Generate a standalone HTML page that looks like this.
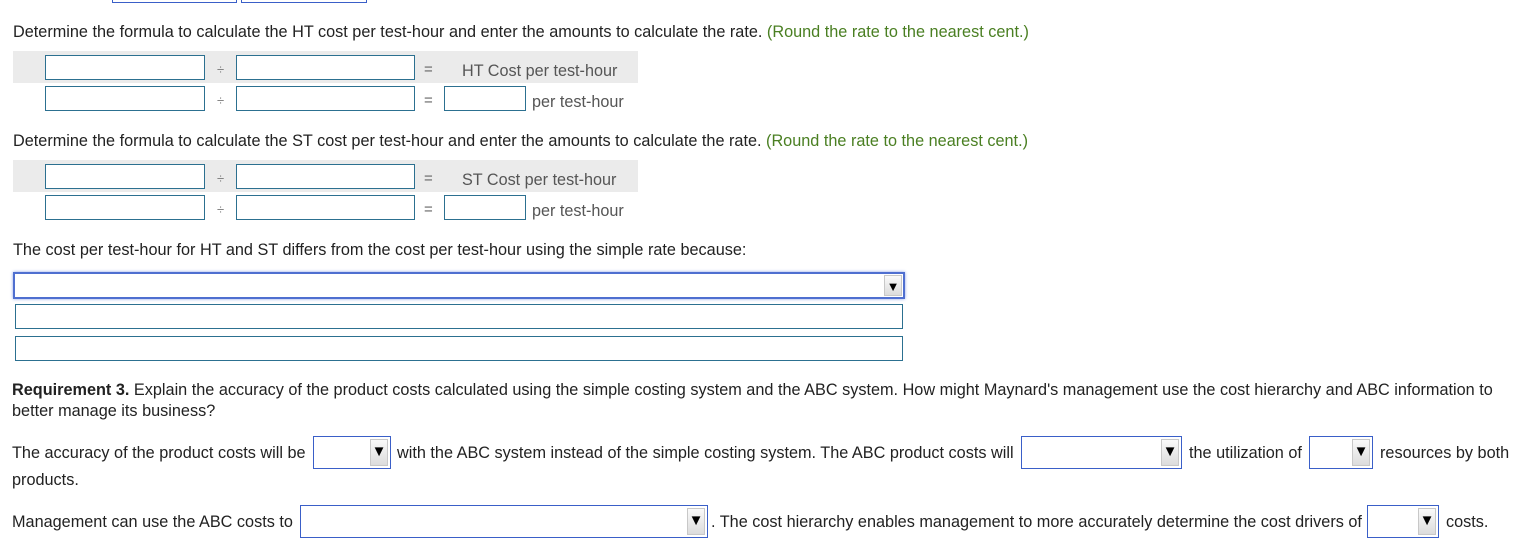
<!DOCTYPE html>
<html><head><style>
body{margin:0;width:1513px;height:551px;background:#fff;font-family:"Liberation Sans",Arial,sans-serif;font-size:16.25px;color:#222;position:relative;overflow:hidden}
.a{position:absolute;white-space:nowrap}
.t{line-height:18px}
.g{color:#4a7f22}
.band{position:absolute;background:#ebebeb}
.in{position:absolute;border:1px solid #2c7090;background:#fff;box-sizing:border-box}
.op{position:absolute;font-size:13px;color:#777}
.eq{position:absolute;font-size:15px;color:#666}
.lbl{position:absolute;color:#555;font-size:16.2px}
.sel{position:absolute;border:1px solid #3a5fc8;background:#fff;box-sizing:border-box}
.sel .b{position:absolute;right:2px;top:2px;bottom:2px;width:18px;background:linear-gradient(#fafafa,#dcdcdc);border:1px solid #c8c8c8;box-sizing:border-box;font-size:15px;text-align:center;color:#000;line-height:24px}
</style></head><body>
<div class="in" style="left:112px;top:-10px;width:125px;height:13px;border-color:#3a5fc8"></div>
<div class="in" style="left:241px;top:-10px;width:126px;height:13px;border-color:#3a5fc8"></div>

<div class="a t" style="left:13px;top:23px">Determine the formula to calculate the HT cost per test-hour and enter the amounts to calculate the rate. <span class="g">(Round the rate to the nearest cent.)</span></div>
<div class="band" style="left:13px;top:51px;width:625px;height:32px"></div>
<div class="in" style="left:45px;top:55px;width:160px;height:25px"></div>
<div class="op" style="left:217px;top:62px">÷</div>
<div class="in" style="left:236px;top:55px;width:179px;height:25px"></div>
<div class="eq" style="left:424px;top:61px">=</div>
<div class="lbl" style="left:462px;top:62px">HT Cost per test-hour</div>
<div class="in" style="left:45px;top:86px;width:160px;height:25px"></div>
<div class="op" style="left:217px;top:93px">÷</div>
<div class="in" style="left:236px;top:86px;width:179px;height:25px"></div>
<div class="eq" style="left:424px;top:92px">=</div>
<div class="in" style="left:444px;top:86px;width:82px;height:25px"></div>
<div class="lbl" style="left:532px;top:93px">per test-hour</div>

<div class="a t" style="left:13px;top:132px">Determine the formula to calculate the ST cost per test-hour and enter the amounts to calculate the rate. <span class="g">(Round the rate to the nearest cent.)</span></div>
<div class="band" style="left:13px;top:160px;width:625px;height:32px"></div>
<div class="in" style="left:45px;top:164px;width:160px;height:25px"></div>
<div class="op" style="left:217px;top:171px">÷</div>
<div class="in" style="left:236px;top:164px;width:179px;height:25px"></div>
<div class="eq" style="left:424px;top:170px">=</div>
<div class="lbl" style="left:462px;top:171px">ST Cost per test-hour</div>
<div class="in" style="left:45px;top:195px;width:160px;height:25px"></div>
<div class="op" style="left:217px;top:202px">÷</div>
<div class="in" style="left:236px;top:195px;width:179px;height:25px"></div>
<div class="eq" style="left:424px;top:201px">=</div>
<div class="in" style="left:444px;top:195px;width:82px;height:25px"></div>
<div class="lbl" style="left:532px;top:202px">per test-hour</div>

<div class="a t" style="left:13px;top:241px">The cost per test-hour for HT and ST differs from the cost per test-hour using the simple rate because:</div>
<div class="sel" style="left:13px;top:272px;width:892px;height:27px;border:2px solid #4f6fd0;box-shadow:0 0 3px #8aa0e8"><div class="b" style="right:1px;top:1px;bottom:1px;line-height:21px;font-size:13px">▼</div></div>
<div class="in" style="left:15px;top:304px;width:888px;height:25px"></div>
<div class="in" style="left:15px;top:336px;width:888px;height:25px"></div>

<div class="a t" style="left:12px;top:381px"><b>Requirement 3.</b> Explain the accuracy of the product costs calculated using the simple costing system and the ABC system. How might Maynard's management use the cost hierarchy and ABC information to</div>
<div class="a t" style="left:12px;top:402px">better manage its business?</div>

<div class="a t" style="left:12px;top:444px">The accuracy of the product costs will be</div>
<div class="sel" style="left:313px;top:436px;width:78px;height:33px"><div class="b">▼</div></div>
<div class="a t" style="left:397px;top:444px">with the ABC system instead of the simple costing system. The ABC product costs will</div>
<div class="sel" style="left:1021px;top:436px;width:161px;height:33px"><div class="b">▼</div></div>
<div class="a t" style="left:1189px;top:444px">the utilization of</div>
<div class="sel" style="left:1309px;top:436px;width:64px;height:33px"><div class="b">▼</div></div>
<div class="a t" style="left:1380px;top:444px">resources by both</div>
<div class="a t" style="left:12px;top:471px">products.</div>

<div class="a t" style="left:12px;top:513px">Management can use the ABC costs to</div>
<div class="sel" style="left:300px;top:505px;width:408px;height:33px"><div class="b">▼</div></div>
<div class="a t" style="left:711px;top:513px">. The cost hierarchy enables management to more accurately determine the cost drivers of</div>
<div class="sel" style="left:1367px;top:505px;width:72px;height:33px"><div class="b">▼</div></div>
<div class="a t" style="left:1446px;top:513px">costs.</div>
</body></html>
